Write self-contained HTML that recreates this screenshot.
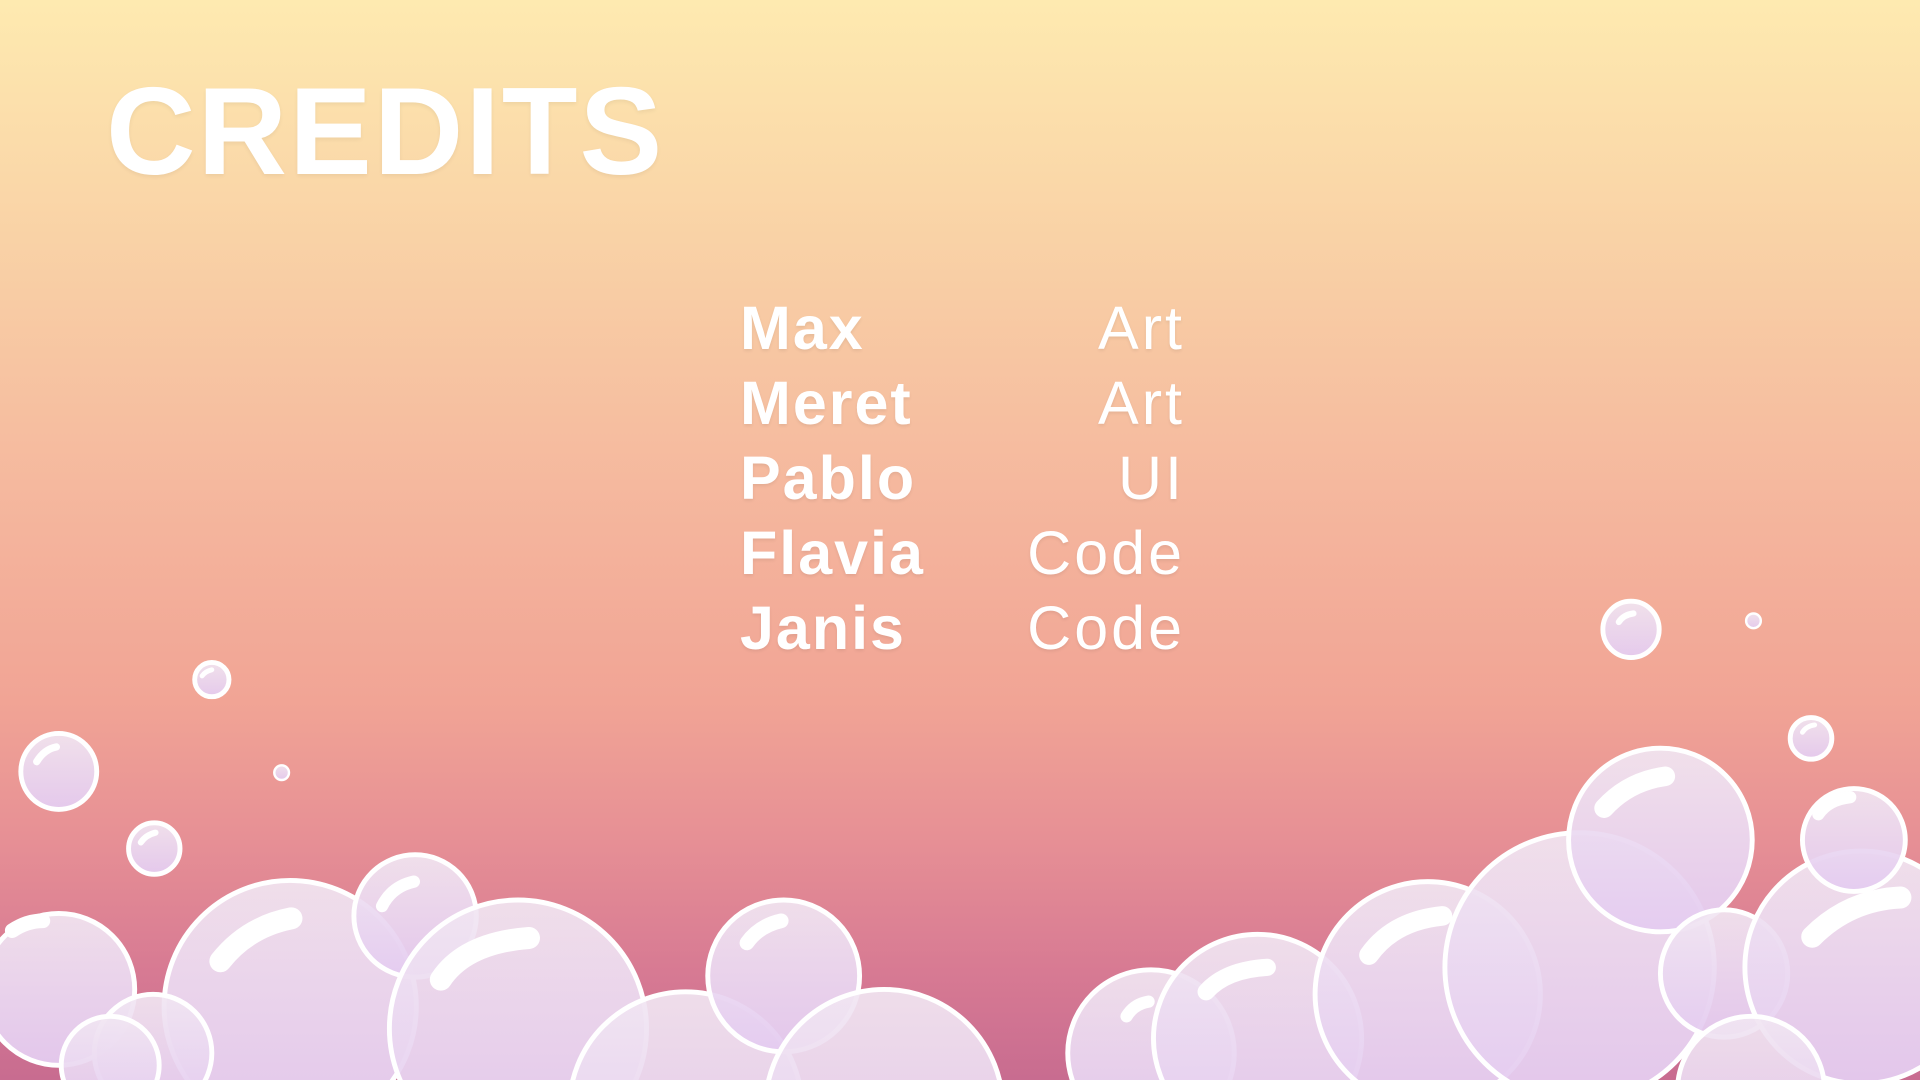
<!DOCTYPE html>
<html><head><meta charset="utf-8"><style>
html,body{margin:0;padding:0;overflow:hidden;width:1920px;height:1080px}
body{position:relative;
background:linear-gradient(180deg,#feeab0 0%,#f9d2a6 22%,#f5b89e 45%,#f1a495 65%,#e68f95 78%,#d77a93 90%,#c86c90 100%);
font-family:"Liberation Sans",sans-serif;}
h1{position:absolute;left:106px;top:70px;margin:0;font-size:124px;line-height:1;font-weight:900;color:#fff;letter-spacing:2px;
text-shadow:0 2px 4px rgba(0,0,0,.06)}
.row{position:absolute;left:740px;width:442px;height:75px;color:#fff;font-size:61px;text-shadow:0 2px 3px rgba(0,0,0,.07)}
.row b{position:absolute;left:0;bottom:0;font-weight:700;letter-spacing:2px}
.row span{position:absolute;right:0;bottom:0;font-weight:400;letter-spacing:3px;margin-right:-3px}
svg{position:absolute;left:0;top:0;display:block;overflow:hidden}
</style></head><body>
<h1>CREDITS</h1>
<div class="row" style="top:288px"><b>Max</b><span>Art</span></div>
<div class="row" style="top:363px"><b>Meret</b><span>Art</span></div>
<div class="row" style="top:438px"><b>Pablo</b><span>UI</span></div>
<div class="row" style="top:513px"><b>Flavia</b><span>Code</span></div>
<div class="row" style="top:588px"><b>Janis</b><span>Code</span></div>
<svg width="1920" height="1080" viewBox="0 0 1568 882">
<defs>
<linearGradient id="f" x1="0" y1="0" x2="0" y2="1">
<stop offset="0" stop-color="#f1e6f2" stop-opacity=".92"/>
<stop offset="1" stop-color="#e4cbf0" stop-opacity=".95"/>
</linearGradient>
</defs>
<g id="b" fill="url(#f)" stroke="#fff" stroke-width="4">
<circle cx="48" cy="808" r="62"/>
<circle cx="237" cy="822" r="103"/>
<circle cx="339" cy="748" r="50"/>
<circle cx="423" cy="840" r="105"/>
<circle cx="560" cy="905" r="95"/>
<circle cx="640" cy="797" r="62"/>
<circle cx="722" cy="905" r="97"/>
<circle cx="940" cy="860" r="68"/>
<circle cx="1027" cy="848" r="85"/>
<circle cx="1166" cy="812" r="92"/>
<circle cx="1290" cy="790" r="110"/>
<circle cx="1356" cy="686" r="75"/>
<circle cx="1408" cy="795" r="52"/>
<circle cx="1520" cy="790" r="95"/>
<circle cx="1430" cy="890" r="60"/>
<circle cx="125" cy="860" r="48"/>
<circle cx="90" cy="870" r="40"/>
<circle cx="173" cy="555" r="14"/>
<circle cx="230" cy="631" r="6" stroke-width="2"/>
<circle cx="48" cy="630" r="31"/>
<circle cx="126" cy="693" r="21"/>
<circle cx="1332" cy="514" r="23"/>
<circle cx="1432" cy="507" r="6" stroke-width="2"/>
<circle cx="1479" cy="603" r="17"/>
<circle cx="1514" cy="686" r="42"/>
</g>
<g fill="none" stroke="#fff" stroke-linecap="round">
<path d="M10 760 q12-8 25-8" stroke-width="12"/>
<path d="M180 785 q22-28 58-35" stroke-width="18"/>
<path d="M312 740 q8-16 26-20" stroke-width="10"/>
<path d="M360 800 q20-30 72-34" stroke-width="18"/>
<path d="M610 770 q10-14 28-18" stroke-width="12"/>
<path d="M920 830 q6-10 18-12" stroke-width="10"/>
<path d="M985 810 q16-18 50-20" stroke-width="14"/>
<path d="M1118 780 q20-28 60-32" stroke-width="16"/>
<path d="M1310 660 q20-22 50-26" stroke-width="16"/>
<path d="M1485 665 q8-12 26-14" stroke-width="10"/>
<path d="M1480 765 q30-30 72-32" stroke-width="18"/>
<path d="M30 622 q6-10 16-12" stroke-width="6"/>
<path d="M115 688 q4-6 12-8" stroke-width="5"/>
<path d="M1322 508 q4-6 12-7" stroke-width="5"/>
<path d="M1472 598 q3-5 10-6" stroke-width="4"/>
<path d="M165 552 q3-4 8-5" stroke-width="4"/>
</g>
</svg>
</body></html>
